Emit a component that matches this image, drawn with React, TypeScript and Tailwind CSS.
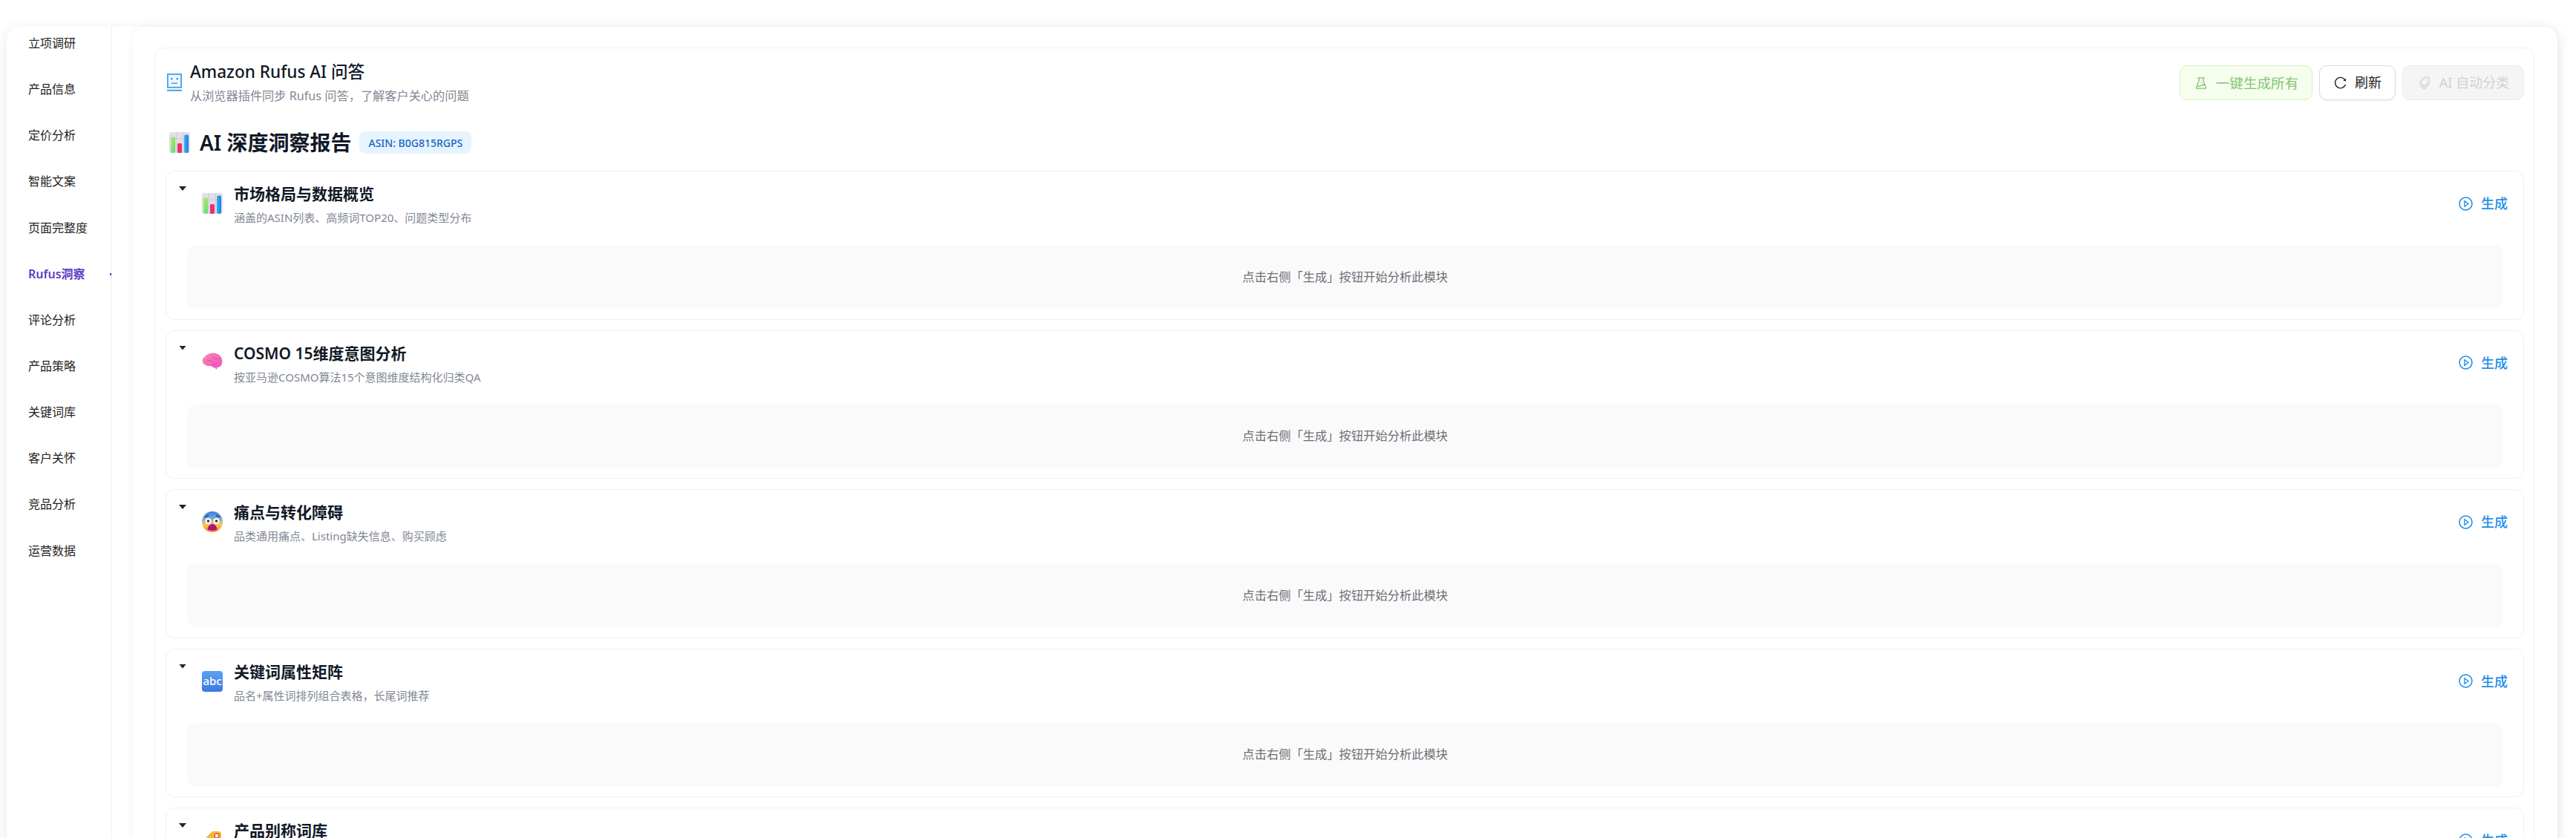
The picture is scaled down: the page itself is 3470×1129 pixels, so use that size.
import { AiOutlineExperiment, AiOutlineReload, AiOutlineTags, AiOutlinePlayCircle } from "react-icons/ai";

const FONT = "font-['Noto_Sans','Noto_Sans_CJK_SC',sans-serif]";

function ChartEmoji({ size, id }: { size: number; id: string }) {
  return (
    <svg width={size} height={size} viewBox="0 0 28 28">
      <defs>
        <linearGradient id={`gGreen${id}`} x1="0" y1="0" x2="1" y2="1">
          <stop offset="0" stopColor="#c4e84f" />
          <stop offset="1" stopColor="#4fe08a" />
        </linearGradient>
        <linearGradient id={`gBlue${id}`} x1="0" y1="0" x2="1" y2="0">
          <stop offset="0" stopColor="#34b4f5" />
          <stop offset="1" stopColor="#1b7fdc" />
        </linearGradient>
      </defs>
      <rect x="0" y="0" width="28" height="28" rx="3" fill="#e3dfe6" />
      <path d="M0 9h28M0 18h28M9.5 0v28M18.5 0v28" stroke="#cfcad4" strokeWidth="1" />
      <rect x="2" y="6.5" width="6" height="21.5" rx="2" fill={`url(#gGreen${id})`} />
      <rect x="11" y="15" width="6" height="13" rx="1.5" fill="#e9326f" />
      <rect x="20" y="3.5" width="6" height="24.5" rx="2" fill={`url(#gBlue${id})`} />
    </svg>
  );
}

function BrainEmoji() {
  return (
    <svg width="28" height="28" viewBox="0 0 28 28">
      <defs>
        <linearGradient id="gBrain" x1="0" y1="0" x2="1" y2="1">
          <stop offset="0" stopColor="#f58ab0" />
          <stop offset="1" stopColor="#f24fc0" />
        </linearGradient>
      </defs>
      <path
        d="M10 1.5c5-2 12-.5 15 3.5 3 3.500 3 8.500 1 12-1 2-3 3-5.500 3l-.5 3-2.500-2.500c-2 0-3.500-1-5-2.500-2 .5-4.500 .5-6-.5-2.500-.5-5-2.500-5.500-5-1-3 .5-5.500 3-6.500 .5-2 3-3.500 6-4.500z"
        fill="url(#gBrain)"
      />
      <path d="M7 11c3-1 6 0 8 2M12 16c3 1 6 0 8-2M15 5c1 3 4 4 7 3" stroke="#d93a9a" strokeWidth="0.8" fill="none" />
    </svg>
  );
}

function ScreamEmoji() {
  return (
    <svg width="28" height="28" viewBox="0 0 28 28">
      <defs>
        <linearGradient id="gFace" x1="0" y1="0" x2="0" y2="1">
          <stop offset="0" stopColor="#2f7fe6" />
          <stop offset="0.42" stopColor="#8fb4c8" />
          <stop offset="0.62" stopColor="#fdc84a" />
          <stop offset="1" stopColor="#f7882f" />
        </linearGradient>
      </defs>
      <circle cx="14" cy="14" r="14" fill="url(#gFace)" />
      <circle cx="8.500" cy="13" r="4" fill="#fff" />
      <circle cx="19.500" cy="13" r="4" fill="#fff" />
      <circle cx="8.500" cy="13" r="1.800" fill="#3a2a3a" />
      <circle cx="19.500" cy="13" r="1.800" fill="#3a2a3a" />
      <path d="M4.500 7.500l4-2M23.500 7.500l-4-2" stroke="#2c2438" strokeWidth="1.300" strokeLinecap="round" />
      <path d="M14 17c3.500 0 6 3 6.500 7.500-2 1-4 1.200-6.500 1.200s-4.500-.2-6.500-1.200C8 20 10.500 17 14 17z" fill="#b0127f" />
    </svg>
  );
}

function AbcEmoji() {
  return (
    <div className="w-7 h-7 rounded-[4px] bg-gradient-to-b from-[#5aa2f2] to-[#3f78e0] flex items-center justify-center text-white text-[15px] leading-none font-medium">
      abc
    </div>
  );
}

function TagEmoji() {
  return (
    <svg width="28" height="28" viewBox="0 0 28 28">
      <path d="M2 14L14 2h8a4 4 0 0 1 4 4v8L14 26z" fill="#f9b92e" />
      <circle cx="20" cy="8" r="3" fill="#fff" stroke="#e0574a" strokeWidth="1.500" />
    </svg>
  );
}

function RobotIcon() {
  return (
    <svg width="20" height="24" viewBox="0 0 20 24" className="shrink-0">
      <rect x="0.900" y="0.900" width="18.200" height="17.900" fill="#eef7fe" stroke="#45a0e6" strokeWidth="1.800" />
      <rect x="5" y="6" width="2.400" height="2.400" fill="#3f97dc" />
      <rect x="12.600" y="6" width="2.400" height="2.400" fill="#3f97dc" />
      <rect x="6" y="12.500" width="8" height="1.400" fill="#3f97dc" />
      <rect x="0" y="21.800" width="20" height="2" fill="#45a0e6" />
    </svg>
  );
}

const menu = ["立项调研", "产品信息", "定价分析", "智能文案", "页面完整度", "Rufus洞察", "评论分析", "产品策略", "关键词库", "客户关怀", "竞品分析", "运营数据"];

const sections = [
  { title: "市场格局与数据概览", desc: "涵盖的ASIN列表、高频词TOP20、问题类型分布", icon: <ChartEmoji size={28} id="s" /> },
  { title: "COSMO 15维度意图分析", desc: "按亚马逊COSMO算法15个意图维度结构化归类QA", icon: <BrainEmoji /> },
  { title: "痛点与转化障碍", desc: "品类通用痛点、Listing缺失信息、购买顾虑", icon: <ScreamEmoji /> },
  { title: "关键词属性矩阵", desc: "品名+属性词排列组合表格，长尾词推荐", icon: <AbcEmoji /> },
  { title: "产品别称词库", desc: "", icon: <TagEmoji /> },
];

function Section({ title, desc, icon }: { title: string; desc: string; icon: React.ReactNode }) {
  return (
    <div className="shrink-0 h-[200.5px] rounded-[12px] border border-[#f0f0f0] bg-white pl-[17px] pr-[27px] flex flex-col">
      <div className="h-[99px] flex items-start">
        <div className="w-[10px] h-[6px] mt-[20px] bg-[#1f2430] [clip-path:polygon(0_0,100%_0,50%_100%)]" />
        <div className="ml-[21px] mt-[29px] w-7 h-7">{icon}</div>
        <div className="ml-[15px] mt-[14px]">
          <div className="text-[21px] leading-[32px] font-semibold text-[#111827]">{title}</div>
          <div className="text-[15px] leading-[24px] mt-[4px] text-[#7f8794]">{desc}</div>
        </div>
        <button className="ml-auto -mr-[6px] mt-[31px] flex items-center gap-[10px] text-[#1f8fe8] text-[18px] leading-[24px] font-medium">
          <AiOutlinePlayCircle size={21} />
          生成
        </button>
      </div>
      <div className="ml-[11px] h-[86px] rounded-[12px] bg-[#fafafa] flex items-center justify-center text-[16.3px] text-[#6b6f76]">
        点击右侧「生成」按钮开始分析此模块
      </div>
    </div>
  );
}

export default function App() {
  return (
    <div className={`${FONT} h-screen overflow-hidden bg-white pt-9 pl-[9px] pr-[25px]`}>
      <div className="h-[1200px] flex rounded-[18px] bg-white shadow-[0_4px_20px_rgba(0,0,0,0.09)]">
        <aside className="w-[142px] shrink-0 border-r border-[#f0f0f0] relative">
          <div className="-mt-[9px]">
            {menu.map((m) => (
              <div
                key={m}
                className={`relative h-[62.15px] pl-[29px] flex items-center text-[16px] ${
                  m === "Rufus洞察" ? "text-[#5b3cc4] font-semibold" : "text-[#1f1f1f]"
                }`}
              >
                {m}
                {m === "Rufus洞察" && <span className="absolute right-0 top-[30px] w-[2px] h-[3px] bg-[#5b3cc4]" />}
              </div>
            ))}
          </div>
        </aside>
        <main className="ml-[28px] flex-1 min-w-0 rounded-[18px] bg-white shadow-[0_0_12px_rgba(0,0,0,0.05)] pt-[28px] pl-[29px] pr-[31px]">
          <div className="rounded-[14px] border border-[#f2f2f2] pl-[14px] pr-[13px] h-[1200px]">
            <div className="flex items-start h-[165px]">
              <div className="mt-[34px] ml-[2px]">
                <RobotIcon />
              </div>
              <div className="ml-[11px] mt-[16px]">
                <div className="text-[22.6px] leading-[32px] font-medium text-[#111827]">Amazon Rufus AI 问答</div>
                <div className="text-[16.2px] leading-[24px] mt-[4px] text-[#7f8794]">从浏览器插件同步 Rufus 问答，了解客户关心的问题</div>
                <div className="-ml-[28px] mt-[36px] flex items-center h-[30px]">
                  <ChartEmoji size={28} id="h" />
                  <span className="ml-[13px] text-[28px] leading-[30px] font-semibold text-[#111827] whitespace-nowrap">AI 深度洞察报告</span>
                  <span className="ml-[11px] h-[30px] px-[12px] flex items-center rounded-[8px] bg-[#e6f4ff] text-[#1565c0] text-[14px] font-medium whitespace-nowrap">
                    ASIN: B0G815RGPS
                  </span>
                </div>
              </div>
              <div className="ml-auto mt-[23px] flex gap-[9px] text-[18px]">
                <button className="h-[47px] w-[179px] rounded-[10px] border border-[#d4f0c0] bg-[#f6ffed] text-[#84c276] flex items-center justify-center gap-[10px]">
                  <AiOutlineExperiment size={20} />
                  <span className="text-[18.6px]">一键生成所有</span>
                </button>
                <button className="h-[47px] w-[103px] rounded-[10px] border border-[#d9d9d9] bg-white text-[#222] shadow-[0_2px_0_rgba(0,0,0,0.03)] flex items-center justify-center gap-[10px]">
                  <AiOutlineReload size={19} />
                  刷新
                </button>
                <button className="h-[47px] w-[164px] rounded-[10px] border border-[#ececec] bg-[#f5f5f5] text-[#d2d2d2] flex items-center justify-center gap-[10px]">
                  <AiOutlineTags size={20} />
                  AI 自动分类
                </button>
              </div>
            </div>
            <div className="flex flex-col gap-[14px]">
              {sections.map((s) => (
                <Section key={s.title} {...s} />
              ))}
            </div>
          </div>
        </main>
      </div>
    </div>
  );
}
